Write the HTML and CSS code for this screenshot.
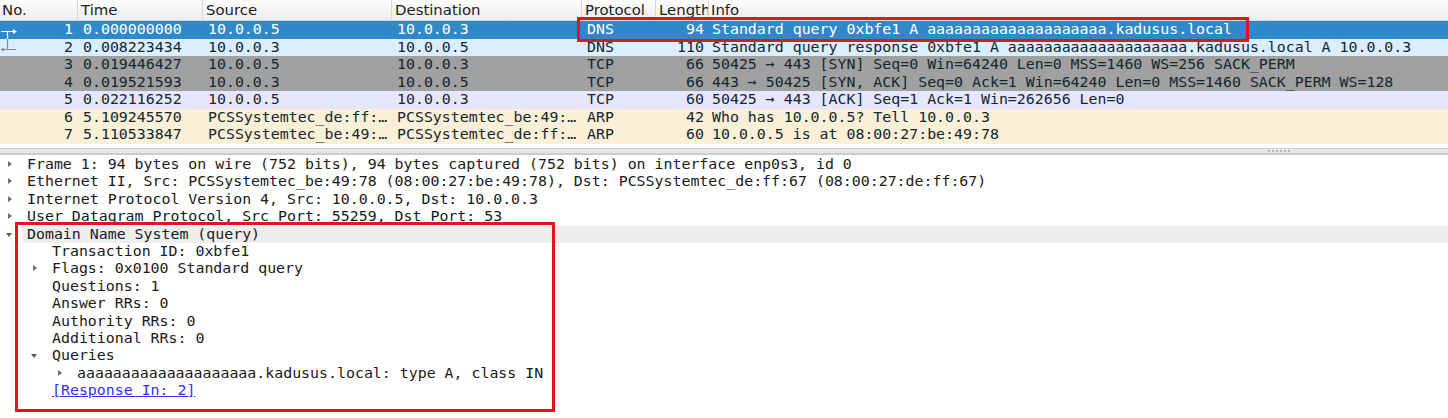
FILE: index.html
```html
<!DOCTYPE html>
<html>
<head>
<meta charset="utf-8">
<link rel="stylesheet" href="styles.css">
</head>
<body>
<div class="app">
  <div class="plist">
    <div class="phead">
      <div class="hc">No.</div>
      <div class="hc">Time</div>
      <div class="hc">Source</div>
      <div class="hc">Destination</div>
      <div class="hc">Protocol</div>
      <div class="hc">Length</div>
      <div class="hc last">Info</div>
    </div>
    <div class="prow sel">
      <div class="c num"><svg class="rel" width="18" height="18" viewBox="0 0 18 18"><path d="M1 10.5H14M7.5 10.5V18" stroke="#fff" stroke-width="1.2" fill="none"/><path d="M13 8L17 10.5L13 13Z" fill="#fff"/></svg><span>1</span></div>
      <div class="c">0.000000000</div>
      <div class="c">10.0.0.5</div>
      <div class="c">10.0.0.3</div>
      <div class="c">DNS</div>
      <div class="c num">94</div>
      <div class="c info">Standard query 0xbfe1 A aaaaaaaaaaaaaaaaaaaa.kadusus.local</div>
    </div>
    <div class="prow dns">
      <div class="c num"><svg class="rel" width="18" height="18" viewBox="0 0 18 18"><path d="M3 10.5H16M7.5 0V10.5" stroke="#8a8a8a" stroke-width="1.2" fill="none"/><path d="M4 8.5L0.5 10.5L4 12.5Z" fill="#8a8a8a"/></svg><span>2</span></div>
      <div class="c">0.008223434</div>
      <div class="c">10.0.0.3</div>
      <div class="c">10.0.0.5</div>
      <div class="c">DNS</div>
      <div class="c num">110</div>
      <div class="c info">Standard query response 0xbfe1 A aaaaaaaaaaaaaaaaaaaa.kadusus.local A 10.0.0.3</div>
    </div>
    <div class="prow syn">
      <div class="c num"><span>3</span></div>
      <div class="c">0.019446427</div>
      <div class="c">10.0.0.5</div>
      <div class="c">10.0.0.3</div>
      <div class="c">TCP</div>
      <div class="c num">66</div>
      <div class="c info">50425 → 443 [SYN] Seq=0 Win=64240 Len=0 MSS=1460 WS=256 SACK_PERM</div>
    </div>
    <div class="prow syn">
      <div class="c num"><span>4</span></div>
      <div class="c">0.019521593</div>
      <div class="c">10.0.0.3</div>
      <div class="c">10.0.0.5</div>
      <div class="c">TCP</div>
      <div class="c num">66</div>
      <div class="c info">443 → 50425 [SYN, ACK] Seq=0 Ack=1 Win=64240 Len=0 MSS=1460 SACK_PERM WS=128</div>
    </div>
    <div class="prow tcp">
      <div class="c num"><span>5</span></div>
      <div class="c">0.022116252</div>
      <div class="c">10.0.0.5</div>
      <div class="c">10.0.0.3</div>
      <div class="c">TCP</div>
      <div class="c num">60</div>
      <div class="c info">50425 → 443 [ACK] Seq=1 Ack=1 Win=262656 Len=0</div>
    </div>
    <div class="prow arp">
      <div class="c num"><span>6</span></div>
      <div class="c">5.109245570</div>
      <div class="c">PCSSystemtec_de:ff:…</div>
      <div class="c">PCSSystemtec_be:49:…</div>
      <div class="c">ARP</div>
      <div class="c num">42</div>
      <div class="c info">Who has 10.0.0.5? Tell 10.0.0.3</div>
    </div>
    <div class="prow arp">
      <div class="c num"><span>7</span></div>
      <div class="c">5.110533847</div>
      <div class="c">PCSSystemtec_be:49:…</div>
      <div class="c">PCSSystemtec_de:ff:…</div>
      <div class="c">ARP</div>
      <div class="c num">60</div>
      <div class="c info">10.0.0.5 is at 08:00:27:be:49:78</div>
    </div>
  </div>

  <div class="splitter"><span class="grip"><i></i><i></i><i></i><i></i><i></i><i></i></span></div>

  <div class="tree">
    <div class="trow l0"><span class="exp right"></span><span class="lbl">Frame 1: 94 bytes on wire (752 bits), 94 bytes captured (752 bits) on interface enp0s3, id 0</span></div>
    <div class="trow l0"><span class="exp right"></span><span class="lbl">Ethernet II, Src: PCSSystemtec_be:49:78 (08:00:27:be:49:78), Dst: PCSSystemtec_de:ff:67 (08:00:27:de:ff:67)</span></div>
    <div class="trow l0"><span class="exp right"></span><span class="lbl">Internet Protocol Version 4, Src: 10.0.0.5, Dst: 10.0.0.3</span></div>
    <div class="trow l0"><span class="exp right"></span><span class="lbl">User Datagram Protocol, Src Port: 55259, Dst Port: 53</span></div>
    <div class="trow l0 tsel"><span class="exp down"></span><span class="lbl">Domain Name System (query)</span></div>
    <div class="trow l1"><span class="exp"></span><span class="lbl">Transaction ID: 0xbfe1</span></div>
    <div class="trow l1"><span class="exp right"></span><span class="lbl">Flags: 0x0100 Standard query</span></div>
    <div class="trow l1"><span class="exp"></span><span class="lbl">Questions: 1</span></div>
    <div class="trow l1"><span class="exp"></span><span class="lbl">Answer RRs: 0</span></div>
    <div class="trow l1"><span class="exp"></span><span class="lbl">Authority RRs: 0</span></div>
    <div class="trow l1"><span class="exp"></span><span class="lbl">Additional RRs: 0</span></div>
    <div class="trow l1"><span class="exp down"></span><span class="lbl">Queries</span></div>
    <div class="trow l2"><span class="exp right"></span><span class="lbl">aaaaaaaaaaaaaaaaaaaa.kadusus.local: type A, class IN</span></div>
    <div class="trow l1"><span class="exp"></span><span class="lbl"><a class="link">[Response In: 2]</a></span></div>
  </div>

  <div class="mark mark1"></div>
  <div class="mark mark2"></div>
</div>
</body>
</html>
```
FILE: styles.css
```css
html, body {
  margin: 0;
  padding: 0;
  background: #ffffff;
}
.app {
  position: relative;
  width: 1448px;
  height: 418px;
  overflow: hidden;
  font-family: "DejaVu Sans Mono", monospace;
  font-size: 14.9px;
  color: #12272e;
}
.plist {
  height: 148px;
  background: #ffffff;
}
.phead {
  display: grid;
  grid-template-columns: 78px 125px 189px 190px 74px 53px 1fr;
  height: 20px;
  border-bottom: 1px solid #d4d4d4;
  background: linear-gradient(#fdfdfd, #eeeeee);
  font-family: "DejaVu Sans", sans-serif;
  font-size: 14.9px;
  color: #1c1c1c;
}
.hc {
  border-right: 1px solid #d6d6d6;
  padding-left: 3px;
  line-height: 20px;
  white-space: nowrap;
  overflow: hidden;
}
.hc:first-child { padding-left: 2px; }
.hc.last { border-right: none; padding-left: 2px; }
.prow {
  display: grid;
  grid-template-columns: 78px 125px 189px 190px 74px 53px 1fr;
  height: 17.5px;
  line-height: 17.5px;
  white-space: nowrap;
}
.c {
  padding-left: 5px;
  overflow: hidden;
}
.c.num {
  padding-left: 0;
  padding-right: 5px;
  display: flex;
  justify-content: flex-end;
  position: relative;
}
.c.info { padding-left: 3px; }
.rel {
  position: absolute;
  left: 0;
  top: 0;
}
.prow.sel { background: #2f89c8; color: #ffffff; }
.prow.dns { background: #daeeff; }
.prow.syn { background: #a0a0a0; }
.prow.tcp { background: #e7e6ff; }
.prow.arp { background: #faf0d7; }

.splitter {
  height: 4px;
  border-top: 1px solid #d2d2d2;
  border-bottom: 2px solid #cccccc;
  background: #e6e6e6;
  display: flex;
  justify-content: flex-end;
  align-items: center;
  padding-right: 158px;
}
.grip {
  display: flex;
  gap: 2px;
}
.grip i {
  display: block;
  width: 2px;
  height: 2px;
  background: #b4b4b4;
}
.tree {
  padding-top: 1px;
}
.trow {
  display: flex;
  align-items: center;
  height: 17.4px;
  line-height: 17.4px;
  white-space: nowrap;
  color: #1a1a1a;
}
.trow.l0 { padding-left: 7px; }
.trow.l1 { padding-left: 32px; }
.trow.l2 { padding-left: 57px; }
.exp {
  width: 15px;
  height: 17.4px;
  flex: none;
  position: relative;
}
.exp.right::before {
  content: "";
  position: absolute;
  left: 1px;
  top: 5px;
  border-left: 4px solid #6e6e6e;
  border-top: 3.5px solid transparent;
  border-bottom: 3.5px solid transparent;
}
.exp.down::before {
  content: "";
  position: absolute;
  left: -1px;
  top: 7px;
  border-top: 4px solid #5e5e5e;
  border-left: 3.5px solid transparent;
  border-right: 3.5px solid transparent;
}
.lbl {
  padding-left: 5px;
  flex: 1;
}
.trow.tsel .lbl { background: #eeeeee; }
.link {
  color: #3232f0;
  text-decoration: underline;
}
.mark {
  position: absolute;
  border: 3px solid #e3141e;
  box-sizing: border-box;
}
.mark1 {
  left: 577px;
  top: 17px;
  width: 672px;
  height: 25px;
}
.mark2 {
  left: 15px;
  top: 222px;
  width: 540px;
  height: 190px;
}
```
